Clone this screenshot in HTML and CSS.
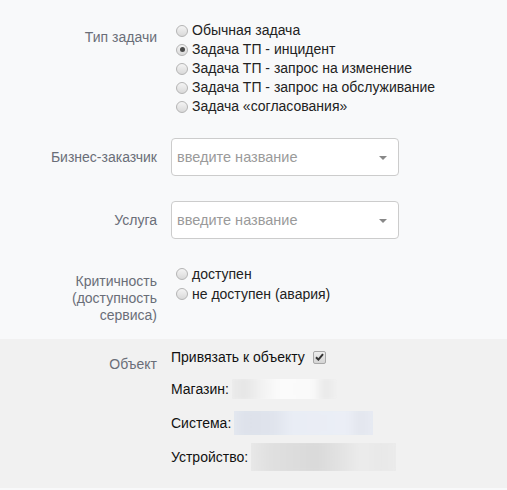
FILE: index.html
```html
<!DOCTYPE html>
<html>
<head>
    <meta charset="utf-8">
    <title>Задача</title>
    <link rel="stylesheet" href="styles.css">
</head>
<body>
    <form class="task-form">
        <div class="main-part">
            <div class="row row-first">
                <div class="label">Тип задачи</div>
                <div class="radios">
                    <div class="radio"><span class="dot"></span>Обычная задача</div>
                    <div class="radio"><span class="dot checked"></span>Задача ТП - инцидент</div>
                    <div class="radio"><span class="dot"></span>Задача ТП - запрос на изменение</div>
                    <div class="radio"><span class="dot"></span>Задача ТП - запрос на обслуживание</div>
                    <div class="radio"><span class="dot"></span>Задача «согласования»</div>
                </div>
            </div>
            <div class="row row-select">
                <div class="label">Бизнес-заказчик</div>
                <div class="select"><span class="placeholder">введите название</span><span class="arrow"></span></div>
            </div>
            <div class="row row-select">
                <div class="label">Услуга</div>
                <div class="select"><span class="placeholder">введите название</span><span class="arrow"></span></div>
            </div>
            <div class="row row-crit">
                <div class="label">Критичность<br>(доступность<br>сервиса)</div>
                <div class="radios">
                    <div class="radio"><span class="dot"></span>доступен</div>
                    <div class="radio"><span class="dot"></span>не доступен (авария)</div>
                </div>
            </div>
        </div>
        <div class="object-part">
            <div class="row">
                <div class="label label-object">Объект</div>
                <div class="object-fields">
                    <div class="bind">Привязать к объекту <span class="check">
                        <svg width="9" height="8" viewBox="0 0 9 8"><path d="M1 4.2 L3.4 6.6 L8 1.2" fill="none" stroke="#333" stroke-width="2"/></svg>
                    </span></div>
                    <div class="field"><span>Магазин:</span><span class="blur blur-shop"></span></div>
                    <div class="field"><span>Система:</span><span class="blur blur-system"></span></div>
                    <div class="field"><span>Устройство:</span><span class="blur blur-device"></span></div>
                </div>
            </div>
        </div>
    </form>
</body>
</html>
```

FILE: styles.css
```css
body {
    margin: 0;
    background-color: #f8f9fa;
    font-family: "Liberation Sans", Arial, sans-serif;
    font-size: 14px;
    color: #222;
}
.row {
    display: grid;
    grid-template-columns: 157px 1fr;
    column-gap: 14px;
}
.label {
    text-align: right;
    color: #6a6e78;
    line-height: 17px;
}
.main-part {
    padding-top: 21px;
    padding-bottom: 15px;
}
.row-first .label {
    padding-top: 8px;
}
.radios {
    padding-left: 5px;
}
.radio {
    height: 19px;
    line-height: 19px;
    display: flex;
    align-items: center;
}
.dot {
    width: 10px;
    height: 10px;
    border: 1px solid #b4b4b4;
    border-radius: 50%;
    background: linear-gradient(#f4f4f4, #d9d9d9);
    margin-right: 4px;
    position: relative;
    flex-shrink: 0;
}
.dot.checked::after {
    content: "";
    position: absolute;
    left: 2.5px;
    top: 2.5px;
    width: 5px;
    height: 5px;
    border-radius: 50%;
    background-color: #4a4a4a;
}
.row-select {
    margin-top: 22px;
    align-items: center;
}
.row-select + .row-select {
    margin-top: 25px;
}
.select {
    height: 36px;
    border: 1px solid #cccccc;
    border-radius: 4px;
    background-color: #fff;
    display: flex;
    align-items: center;
    justify-content: space-between;
    padding: 0 11px 0 5px;
    box-sizing: content-box;
    width: 210px;
}
.placeholder {
    color: #9a9a9a;
    font-size: 14.5px;
}
.arrow {
    width: 0;
    height: 0;
    border-left: 4px solid transparent;
    border-right: 4px solid transparent;
    border-top: 4px solid #888;
    margin-top: 1px;
}
.row-crit {
    margin-top: 25px;
}
.row-crit .radio {
    height: 20px;
}
.row-crit .label {
    padding-top: 9px;
}
.object-part {
    background-color: #f1f1f1;
    padding-top: 9px;
    padding-bottom: 14px;
    margin-bottom: 2px;
}
.label-object {
    padding-top: 8px;
}
.bind {
    height: 18px;
    line-height: 18px;
    display: flex;
    align-items: center;
    color: #111;
}
.check {
    width: 11px;
    height: 11px;
    border: 1px solid #a8a8a8;
    border-radius: 2px;
    background: linear-gradient(#eeeeee, #d4d4d4);
    margin-left: 8px;
    display: flex;
    align-items: center;
    justify-content: center;
}
.field {
    height: 34px;
    display: flex;
    align-items: center;
    color: #111;
}
.bind + .field {
    margin-top: 6px;
}
/* blurred values, drawn as soft boxes */
.blur {
    display: inline-block;
    margin-left: 3px;
    overflow: hidden;
    position: relative;
}
.blur::before {
    content: "";
    position: absolute;
    inset: -4px;
    filter: blur(3px);
}
.blur-shop {
    width: 105px;
    height: 20px;
    background-color: #f4f4f4;
}
.blur-shop::before {
    background: linear-gradient(90deg, #ececec 0%, #e6e6e6 15%, #f2f2f2 30%, #fbfbfb 45%, #fafafa 75%, #e8e8e8 86%, #f0f0f0 95%);
}
.blur-system {
    width: 139px;
    height: 24px;
    background-color: #e7ebf3;
}
.blur-system::before {
    background: linear-gradient(90deg, #e4e8f0 0%, #dde1ea 12%, #e0e4ed 30%, #e9edf5 42%, #ebeef6 80%, #e3e6ee 88%, #e8ebf3 100%);
}
.blur-device {
    width: 145px;
    height: 28px;
    background-color: #e8e8e8;
}
.blur-device::before {
    background: linear-gradient(90deg, #e9e9e9 0%, #e0e0e0 15%, #d9d9d9 45%, #e2e2e2 60%, #ececec 75%, #e8e8e8 88%, #ececec 100%);
}
```
